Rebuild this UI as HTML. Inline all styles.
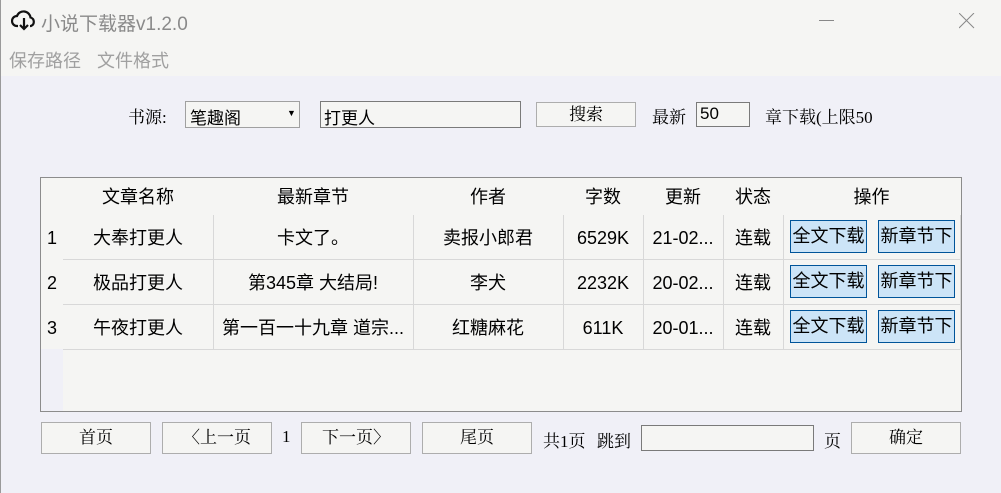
<!DOCTYPE html>
<html><head><meta charset="utf-8"><style>
*{margin:0;padding:0;box-sizing:border-box}
body{width:1001px;height:493px;overflow:hidden;background:#f0f0f7;position:relative;font-family:"Liberation Sans","Noto Sans CJK SC",sans-serif;color:#000}
.a{position:absolute;white-space:nowrap}
.top{position:absolute;left:0;top:0;width:1001px;height:76px;background:#f5f5f3}
.serif{font-family:"Liberation Serif","Noto Serif CJK SC",serif}
.box{position:absolute;background:#f5f5f3;border:1px solid #a0a0a0}
.btn{position:absolute;background:#f5f5f3;border:1px solid #adadad;font-family:"Liberation Serif","Noto Serif CJK SC",serif;font-size:17px;text-align:center}
.tbl{position:absolute;left:40px;top:177px;width:922px;height:235px;border:1px solid #8c8c8c;background:#f5f5f3}
.cell{position:absolute;font-size:18px;text-align:center;line-height:44px}
.hl{position:absolute;background:#d8d8d8}
.op{position:absolute;width:77px;height:33px;background:#cce4f7;border:1px solid #005499;font-size:18px;text-align:center;line-height:31px}
</style></head><body>
<div class="top"></div>
<div class="a" style="left:0;top:0;width:1px;height:493px;background:#9a9a9a"></div>
<svg class="a" style="left:11px;top:9px" width="26" height="24" viewBox="0 0 26 24"><path d="M7 17H6a5 5 0 0 1 0-10 7 7 0 0 1 13.5 1.5A4.5 4.5 0 0 1 20 17h-1" fill="none" stroke="#111" stroke-width="2.2"/><path d="M13 9v11M9 16l4 4 4-4" fill="none" stroke="#111" stroke-width="2.2"/></svg>
<div class="a" style="left:41px;top:9px;font-size:19px;color:#8a8a8a">小说下载器v1.2.0</div>
<div class="a" style="left:819px;top:20px;width:15px;height:1px;background:#888"></div>
<svg class="a" style="left:959px;top:13px" width="16" height="16"><path d="M0 0L15 15M15 0L0 15" stroke="#888" stroke-width="1"/></svg>
<div class="a" style="left:9px;top:47px;font-size:18px;color:#a0a0a0">保存路径</div>
<div class="a" style="left:97px;top:47px;font-size:18px;color:#a0a0a0">文件格式</div>

<div class="a serif" style="left:128px;top:103px;font-size:17px">书源:</div>
<div class="box" style="left:185px;top:101px;width:115px;height:27px"><span class="a" style="left:4px;top:2px;font-size:17px">笔趣阁</span><span class="a" style="left:101px;top:6px;font-size:9px">▼</span></div>
<div class="box" style="left:320px;top:101px;width:201px;height:27px;border-color:#7a7a7a"><span class="a" style="left:3px;top:2px;font-size:17px">打更人</span></div>
<div class="btn" style="left:536px;top:102px;width:100px;height:25px;line-height:23px">搜索</div>
<div class="a serif" style="left:652px;top:103px;font-size:17px">最新</div>
<div class="box" style="left:696px;top:102px;width:54px;height:25px;border-color:#7a7a7a"><span class="a" style="left:3px;top:1px;font-size:17px">50</span></div>
<div class="a serif" style="left:765px;top:103px;font-size:17px">章下载(上限50</div>

<div class="tbl">
<div class="a" style="left:0;top:37px;width:22px;height:196px;background:#f0f0f7"></div>
<div class="a" style="left:0;top:37px;width:22px;height:134px;background:#f5f5f3"></div>
<div class="hl" style="left:22px;top:81px;width:898px;height:1px"></div>
<div class="hl" style="left:22px;top:126px;width:898px;height:1px"></div>
<div class="hl" style="left:22px;top:171px;width:898px;height:1px"></div>
<div class="hl" style="left:172px;top:37px;width:1px;height:134px"></div>
<div class="hl" style="left:372px;top:37px;width:1px;height:134px"></div>
<div class="hl" style="left:522px;top:37px;width:1px;height:134px"></div>
<div class="hl" style="left:602px;top:37px;width:1px;height:134px"></div>
<div class="hl" style="left:682px;top:37px;width:1px;height:134px"></div>
<div class="hl" style="left:742px;top:37px;width:1px;height:134px"></div>
<div class="hl" style="left:919px;top:37px;width:1px;height:134px"></div>
<div class="cell" style="left:22px;top:-3px;width:150px">文章名称</div>
<div class="cell" style="left:172px;top:-3px;width:200px">最新章节</div>
<div class="cell" style="left:372px;top:-3px;width:150px">作者</div>
<div class="cell" style="left:522px;top:-3px;width:80px">字数</div>
<div class="cell" style="left:602px;top:-3px;width:80px">更新</div>
<div class="cell" style="left:682px;top:-3px;width:60px">状态</div>
<div class="cell" style="left:742px;top:-3px;width:177px">操作</div>

<div class="cell" style="left:0;top:38px;width:22px">1</div>
<div class="cell" style="left:22px;top:38px;width:150px">大奉打更人</div>
<div class="cell" style="left:172px;top:38px;width:200px">卡文了。</div>
<div class="cell" style="left:372px;top:38px;width:150px">卖报小郎君</div>
<div class="cell" style="left:522px;top:38px;width:80px">6529K</div>
<div class="cell" style="left:602px;top:38px;width:80px">21-02...</div>
<div class="cell" style="left:682px;top:38px;width:60px">连载</div>
<div class="op" style="left:749px;top:42px">全文下载</div>
<div class="op" style="left:837px;top:42px">新章节下</div>

<div class="cell" style="left:0;top:83px;width:22px">2</div>
<div class="cell" style="left:22px;top:83px;width:150px">极品打更人</div>
<div class="cell" style="left:172px;top:83px;width:200px">第345章 大结局!</div>
<div class="cell" style="left:372px;top:83px;width:150px">李犬</div>
<div class="cell" style="left:522px;top:83px;width:80px">2232K</div>
<div class="cell" style="left:602px;top:83px;width:80px">20-02...</div>
<div class="cell" style="left:682px;top:83px;width:60px">连载</div>
<div class="op" style="left:749px;top:87px">全文下载</div>
<div class="op" style="left:837px;top:87px">新章节下</div>

<div class="cell" style="left:0;top:128px;width:22px">3</div>
<div class="cell" style="left:22px;top:128px;width:150px">午夜打更人</div>
<div class="cell" style="left:172px;top:128px;width:200px">第一百一十九章 道宗...</div>
<div class="cell" style="left:372px;top:128px;width:150px">红糖麻花</div>
<div class="cell" style="left:522px;top:128px;width:80px">611K</div>
<div class="cell" style="left:602px;top:128px;width:80px">20-01...</div>
<div class="cell" style="left:682px;top:128px;width:60px">连载</div>
<div class="op" style="left:749px;top:132px">全文下载</div>
<div class="op" style="left:837px;top:132px">新章节下</div>
</div>

<div class="btn" style="left:41px;top:422px;width:110px;height:32px;line-height:30px">首页</div>
<div class="btn" style="left:162px;top:422px;width:110px;height:32px;line-height:30px">〈上一页</div>
<div class="a serif" style="left:282px;top:427px;font-size:17px">1</div>
<div class="btn" style="left:301px;top:422px;width:110px;height:32px;line-height:30px">下一页〉</div>
<div class="btn" style="left:422px;top:422px;width:110px;height:32px;line-height:30px">尾页</div>
<div class="a serif" style="left:543px;top:427px;font-size:17px">共1页</div>
<div class="a serif" style="left:597px;top:427px;font-size:17px">跳到</div>
<div class="box" style="left:641px;top:425px;width:173px;height:26px;border-color:#7a7a7a"></div>
<div class="a serif" style="left:824px;top:427px;font-size:17px">页</div>
<div class="btn" style="left:851px;top:422px;width:110px;height:32px;line-height:30px">确定</div>
</body></html>
